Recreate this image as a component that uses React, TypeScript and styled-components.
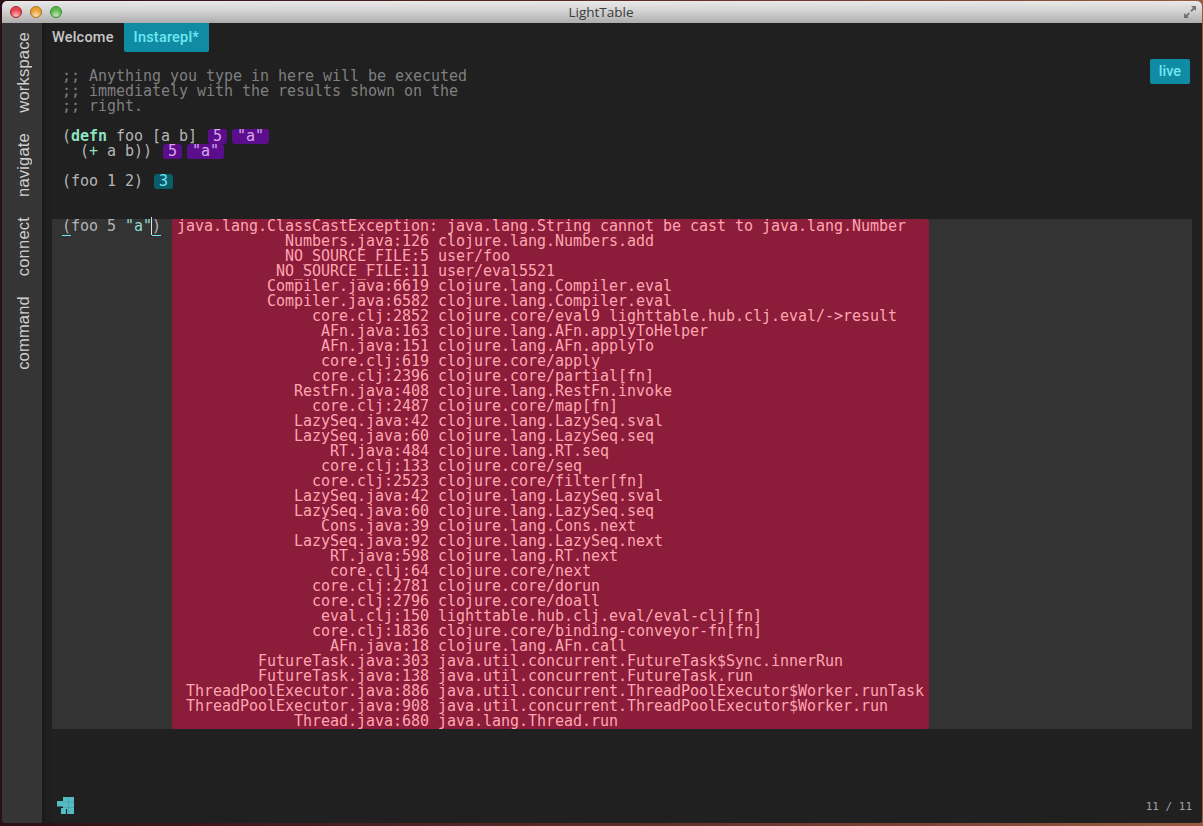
import React from "react";
import styled, { createGlobalStyle } from "styled-components";

const MONO = `"DejaVu Sans Mono", "Liberation Mono", monospace`;
const UI = `"Liberation Sans", Arial, sans-serif`;
const TAB_FONT = `Roboto, "Liberation Sans", sans-serif`;

const GlobalStyle = createGlobalStyle`
  html, body {
    margin: 0;
    padding: 0;
    height: 826px;
    overflow: hidden;
    background: #3a1a1e;
  }
`;

const Desktop = styled.div`
  width: 1203px;
  height: 826px;
  box-sizing: border-box;
  padding: 1px 1px 3px 2px;
  background: linear-gradient(90deg, #2c0f16 0%, #5a2a28 50%, #9a5a40 100%);
`;

const Window = styled.div`
  display: flex;
  flex-direction: column;
  height: 100%;
  border-radius: 5px 5px 3px 3px;
  overflow: hidden;
  background: #202020;
`;

const TitleBar = styled.div`
  position: relative;
  display: flex;
  align-items: center;
  justify-content: center;
  flex: none;
  height: 22px;
  padding-right: 2px;
  background: linear-gradient(180deg, #e9e9e9 0%, #d0d0d0 50%, #adadad 100%);
  font: 13.5px "Open Sans", sans-serif;
  color: #3c3c3c;
`;

const Lights = styled.div`
  position: absolute;
  left: 8px;
  top: 5px;
  display: flex;
  gap: 8px;
`;

const Light = styled.span<{ $c: string; $d: string }>`
  width: 12px;
  height: 12px;
  border-radius: 50%;
  box-sizing: border-box;
  border: 1px solid ${(p) => p.$d};
  background: radial-gradient(circle at 50% 85%, #ffffffaa 0%, transparent 60%), ${(p) => p.$c};
`;

const Resize = styled.svg`
  position: absolute;
  right: 5px;
  top: 4px;
`;

const Main = styled.div`
  display: flex;
  flex: 1;
  min-height: 0;
`;

const SideBar = styled.div`
  flex: none;
  width: 40px;
  background: #353535;
  display: flex;
  flex-direction: column;
  align-items: center;
  padding: 9px 0 0 2px;
  box-sizing: border-box;
  gap: 20px;
`;

const SideItem = styled.div`
  writing-mode: vertical-rl;
  transform: rotate(180deg);
  font: 16.5px/20px ${UI};
  letter-spacing: 0.2px;
  color: #cfcfcf;
`;

const Content = styled.div`
  position: relative;
  flex: 1;
  min-width: 0;
  display: flex;
  flex-direction: column;
  background: linear-gradient(90deg, #1a1a1a 0, #202020 9px);
`;

const Tabs = styled.div`
  display: flex;
  flex: none;
  height: 29px;
`;

const Tab = styled.div<{ $active?: boolean }>`
  display: flex;
  align-items: center;
  padding: 0 10px 1px;
  border-radius: 0 0 2px 2px;
  font: 500 14.5px ${TAB_FONT};
  letter-spacing: 0.2px;
  color: ${(p) => (p.$active ? "#6fe6f2" : "#c8c8c8")};
  background: ${(p) => (p.$active ? "#0f8ca3" : "transparent")};
`;

const LiveButton = styled.div`
  position: absolute;
  right: 12px;
  top: 36px;
  width: 40px;
  height: 25px;
  display: flex;
  align-items: center;
  justify-content: center;
  border-radius: 2px;
  background: #0f8ca3;
  color: #6fe6f2;
  font: 500 14.5px ${TAB_FONT};
`;

const Editor = styled.div`
  flex: 1;
  padding-top: 17px;
  font: 15px/15px ${MONO};
  letter-spacing: -0.03px;
  color: #b5b5b5;
`;

const Line = styled.div`
  height: 15px;
  padding-left: 20px;
  white-space: pre;
`;

const Comment = styled(Line)`
  color: #7f7f7f;
`;

const Spacer = styled.div<{ $h: number }>`
  height: ${(p) => p.$h}px;
`;

const Keyword = styled.span`
  color: #8fe3c0;
  font-weight: bold;
`;

const Op = styled.span`
  color: #8fe3c0;
`;

const Result = styled.span<{ $teal?: boolean }>`
  display: inline-block;
  height: 15px;
  line-height: 15px;
  margin-left: 2px;
  padding: 0 5px;
  border-radius: 3px;
  background: ${(p) => (p.$teal ? "#0c5d6b" : "#5a0e8c")};
  color: ${(p) => (p.$teal ? "#6fe6f2" : "#dca4ee")};
  & + & {
    margin-left: 5px;
  }
`;

const ActiveBlock = styled.div`
  display: flex;
  margin-top: 30px;
  margin-left: 10px;
  width: 1140px;
  background: #333333;
`;

const ActiveCode = styled.div`
  flex: none;
  width: 120px;
  padding-left: 10px;
  box-sizing: border-box;
  white-space: pre;
  color: #b5b5b5;
`;

const Paren = styled.span`
  border-bottom: 1px solid #6fe6f2;
`;

const Caret = styled.span`
  border-left: 1px solid #e0e0e0;
  margin-left: -1px;
`;

const Str = styled.span`
  color: #8fd8d8;
`;

const ErrorBox = styled.pre`
  margin: 0;
  width: 757px;
  height: 510px;
  box-sizing: border-box;
  padding-left: 5px;
  border-radius: 3px;
  background: #8b1c3a;
  color: #ffa6b0;
  font: inherit;
  letter-spacing: inherit;
`;

const Footer = styled.div`
  position: absolute;
  left: 0;
  right: 0;
  bottom: 0;
  height: 30px;
  display: flex;
  align-items: flex-start;
  justify-content: space-between;
  padding: 4px 10px 0 15px;
  box-sizing: border-box;
`;

const Counter = styled.div`
  font: 11px/15px ${MONO};
  color: #9aa0a6;
  margin-top: 2px;
`;

const errorHead = "java.lang.ClassCastException: java.lang.String cannot be cast to java.lang.Number";

const frames: [string, string][] = [
  ["Numbers.java:126", "clojure.lang.Numbers.add"],
  ["NO_SOURCE_FILE:5", "user/foo"],
  ["NO_SOURCE_FILE:11", "user/eval5521"],
  ["Compiler.java:6619", "clojure.lang.Compiler.eval"],
  ["Compiler.java:6582", "clojure.lang.Compiler.eval"],
  ["core.clj:2852", "clojure.core/eval9 lighttable.hub.clj.eval/->result"],
  ["AFn.java:163", "clojure.lang.AFn.applyToHelper"],
  ["AFn.java:151", "clojure.lang.AFn.applyTo"],
  ["core.clj:619", "clojure.core/apply"],
  ["core.clj:2396", "clojure.core/partial[fn]"],
  ["RestFn.java:408", "clojure.lang.RestFn.invoke"],
  ["core.clj:2487", "clojure.core/map[fn]"],
  ["LazySeq.java:42", "clojure.lang.LazySeq.sval"],
  ["LazySeq.java:60", "clojure.lang.LazySeq.seq"],
  ["RT.java:484", "clojure.lang.RT.seq"],
  ["core.clj:133", "clojure.core/seq"],
  ["core.clj:2523", "clojure.core/filter[fn]"],
  ["LazySeq.java:42", "clojure.lang.LazySeq.sval"],
  ["LazySeq.java:60", "clojure.lang.LazySeq.seq"],
  ["Cons.java:39", "clojure.lang.Cons.next"],
  ["LazySeq.java:92", "clojure.lang.LazySeq.next"],
  ["RT.java:598", "clojure.lang.RT.next"],
  ["core.clj:64", "clojure.core/next"],
  ["core.clj:2781", "clojure.core/dorun"],
  ["core.clj:2796", "clojure.core/doall"],
  ["eval.clj:150", "lighttable.hub.clj.eval/eval-clj[fn]"],
  ["core.clj:1836", "clojure.core/binding-conveyor-fn[fn]"],
  ["AFn.java:18", "clojure.lang.AFn.call"],
  ["FutureTask.java:303", "java.util.concurrent.FutureTask$Sync.innerRun"],
  ["FutureTask.java:138", "java.util.concurrent.FutureTask.run"],
  ["ThreadPoolExecutor.java:886", "java.util.concurrent.ThreadPoolExecutor$Worker.runTask"],
  ["ThreadPoolExecutor.java:908", "java.util.concurrent.ThreadPoolExecutor$Worker.run"],
  ["Thread.java:680", "java.lang.Thread.run"],
];

const errorText = [errorHead, ...frames.map(([loc, fn]) => `${loc.padStart(28)} ${fn}`)].join("\n");

export default function App() {
  return (
    <Desktop>
      <GlobalStyle />
      <Window>
        <TitleBar>
          <Lights>
            <Light $c="#e8414f" $d="#a8262f" />
            <Light $c="#e8a030" $d="#a97020" />
            <Light $c="#5cb84a" $d="#3f8a35" />
          </Lights>
          LightTable
          <Resize width="14" height="15" viewBox="0 0 14 15">
            <path d="M8 1h5v5l-1.700-1.700-2.600 2.600-1.300-1.300 2.600-2.600z" fill="#707070" />
            <path d="M1 8v5h5l-1.700-1.700 2.600-2.600-1.300-1.300-2.600 2.600z" fill="#707070" />
          </Resize>
        </TitleBar>
        <Main>
          <SideBar>
            <SideItem>workspace</SideItem>
            <SideItem>navigate</SideItem>
            <SideItem>connect</SideItem>
            <SideItem>command</SideItem>
          </SideBar>
          <Content>
            <Tabs>
              <Tab>Welcome</Tab>
              <Tab $active>Instarepl*</Tab>
            </Tabs>
            <LiveButton>live</LiveButton>
            <Editor>
              <Comment>;; Anything you type in here will be executed</Comment>
              <Comment>;; immediately with the results shown on the</Comment>
              <Comment>;; right.</Comment>
              <Spacer $h={15} />
              <Line>
                (<Keyword>defn</Keyword> foo [a b]{" "}
                <Result>5</Result><Result>"a"</Result>
              </Line>
              <Line>
                {"  "}(<Op>+</Op> a b)){" "}
                <Result>5</Result><Result>"a"</Result>
              </Line>
              <Spacer $h={15} />
              <Line>
                (foo 1 2) <Result $teal>3</Result>
              </Line>
              <ActiveBlock>
                <ActiveCode>
                  <Paren>(</Paren>foo 5 <Str>"a"</Str><Caret /><Paren>)</Paren>
                </ActiveCode>
                <ErrorBox>{errorText}</ErrorBox>
              </ActiveBlock>
            </Editor>
            <Footer>
              <svg width="17" height="17" viewBox="0 0 17 17">
                <path d="M6 0h11v17H10v-5H9v5H4v-6h2V9.500H0V4h6z" fill="#55bcc5" />
                <path d="M11.500 0v17M6 5h11M6 10.500h11" stroke="#3f98a1" strokeWidth="0.6" />
              </svg>
              <Counter>11 / 11</Counter>
            </Footer>
          </Content>
        </Main>
      </Window>
    </Desktop>
  );
}
